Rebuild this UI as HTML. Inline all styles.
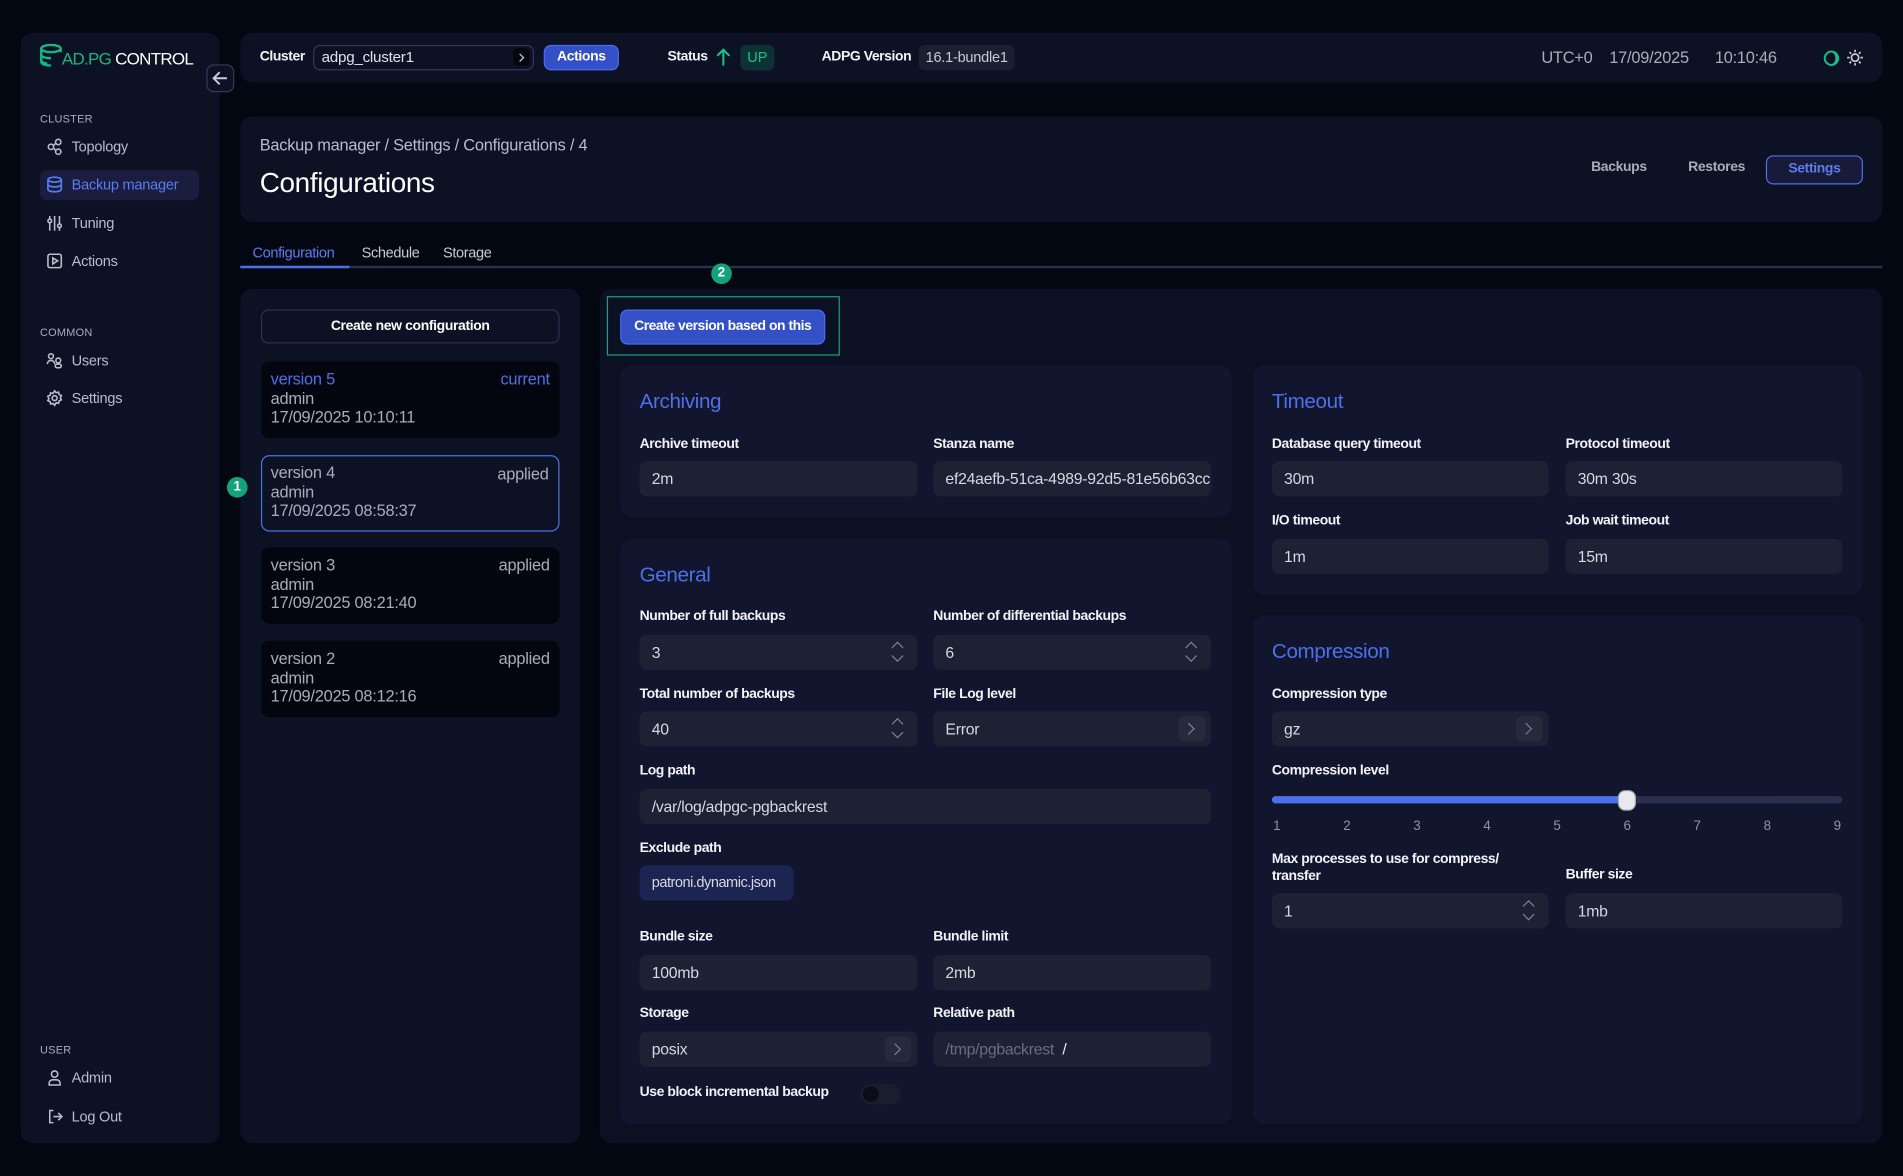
<!DOCTYPE html>
<html><head><meta charset="utf-8"><style>
html,body{margin:0;padding:0;background:#030711;overflow:hidden}
#w{position:absolute;left:0;top:0;width:1568px;height:969px;transform:scale(1.21365);transform-origin:0 0;font-family:"Liberation Sans",sans-serif;color:#e6e8f0;background:#030711}
.a{position:absolute}
.p{position:absolute;background:#0c1124;border-radius:10px}
.c{position:absolute;background:#12152e;border-radius:10px}
.sec{position:absolute;font-size:9px;color:#a9adbd;letter-spacing:.2px}
.nav{position:absolute;font-size:12px;color:#b9bccb;display:flex;align-items:center;gap:7px;letter-spacing:-.2px}
.nav svg{width:14px;height:14px}
.lb{position:absolute;font-size:11.5px;font-weight:bold;color:#f2f3f7;letter-spacing:-.35px}
.in{position:absolute;background:#1d2133;border-radius:6px;height:29px;font-size:13px;color:#d6d8e2;line-height:29px;padding-left:10px;box-sizing:border-box;overflow:hidden;white-space:nowrap;letter-spacing:-.2px}
.h{position:absolute;font-size:17px;color:#4d70e8;letter-spacing:-.3px}
.sp{position:absolute;right:5px;top:3px;width:22px;height:23px;border-radius:5px}
.sp:before,.sp:after{content:"";position:absolute;left:7px;width:6px;height:6px;border-left:1.5px solid #7c8092;border-top:1.5px solid #7c8092}
.sp:before{top:4px;transform:rotate(45deg)}
.sp:after{top:11px;transform:rotate(225deg)}
.ch{position:absolute;right:5px;top:4px;width:22px;height:21px;border-radius:5px;background:#252a3c}
.ch:after{content:"";position:absolute;left:5px;top:7px;width:6px;height:6px;border-right:1.5px solid #7c8092;border-top:1.5px solid #7c8092;transform:rotate(45deg)}
.vc{position:absolute;left:215px;width:246px;height:63px;border-radius:7px;background:#03060e;box-sizing:border-box;font-size:13.5px;color:#a9acb9;padding:7px 8px;line-height:15.5px;letter-spacing:-.2px}
.vc .r{position:absolute;right:8px;top:7px}
.bd{position:absolute;width:17px;height:17px;border-radius:50%;background:#13a37a;color:#fff;font-size:11px;font-weight:bold;text-align:center;line-height:17px}
</style></head><body><div id="w">

<!-- sidebar -->
<div class="p" style="left:17px;top:27px;width:164px;height:915px;background:#0c1124"></div>
<svg class="a" style="left:32px;top:36px" width="22" height="20" viewBox="0 0 22 20"><g fill="none" stroke="#17b583" stroke-width="2"><ellipse cx="10" cy="4" rx="8" ry="3"/><path d="M2 4v11c0 2 4 3 8 3M2 9c0 2 4 3 8 3M2 14c0 1 2 2 5 2.5"/><path d="M18 4v3"/></g></svg>
<div class="a" style="left:51px;top:40px;font-size:14px;letter-spacing:-.6px"><span style="color:#17b583">AD.PG</span> <span style="color:#fff">CONTROL</span></div>
<div class="a" style="left:170px;top:53px;width:21px;height:21px;border:1.2px solid #343a5c;border-radius:6px;background:#0c1124"><svg width="21" height="21" viewBox="0 0 21 21"><path d="M16 10.5H5M10 5.5l-5 5 5 5" fill="none" stroke="#c8cbe0" stroke-width="1.6"/></svg></div>

<div class="sec" style="left:33px;top:93px">CLUSTER</div>
<div class="nav" style="left:38px;top:114px"><svg viewBox="0 0 14 14" fill="none" stroke="#b9bccb" stroke-width="1.3"><circle cx="4" cy="7" r="2.2"/><circle cx="10" cy="3" r="2.2"/><circle cx="10" cy="11" r="2.2"/><path d="M6 6l2-2M6 8l2 2"/></svg>Topology</div>
<div class="a" style="left:33px;top:140px;width:131px;height:25px;background:#1a1d3d;border-radius:6px"></div>
<div class="nav" style="left:38px;top:145px;color:#5b7cf0"><svg viewBox="0 0 14 14" fill="none" stroke="#5b7cf0" stroke-width="1.4"><ellipse cx="7" cy="3" rx="5.5" ry="2"/><path d="M1.5 3v8c0 1.1 2.5 2 5.5 2s5.5-.9 5.5-2V3M1.5 7c0 1.1 2.5 2 5.5 2s5.5-.9 5.5-2"/></svg>Backup manager</div>
<div class="nav" style="left:38px;top:177px"><svg viewBox="0 0 14 14" fill="none" stroke="#b9bccb" stroke-width="1.3"><path d="M3 1v12M11 1v12M7 1v12"/><circle cx="3" cy="5" r="1.5" fill="#0c1124"/><circle cx="11" cy="9" r="1.5" fill="#0c1124"/></svg>Tuning</div>
<div class="nav" style="left:38px;top:208px"><svg viewBox="0 0 14 14" fill="none" stroke="#b9bccb" stroke-width="1.3"><rect x="1.5" y="1.5" width="11" height="11" rx="1.5"/><path d="M5.5 4.5v5l4-2.5z"/></svg>Actions</div>

<div class="sec" style="left:33px;top:269px">COMMON</div>
<div class="nav" style="left:38px;top:290px"><svg viewBox="0 0 14 14" fill="none" stroke="#b9bccb" stroke-width="1.3"><circle cx="4" cy="3.5" r="2"/><path d="M1 10c0-2 1.5-3 3-3s3 1 3 3"/><circle cx="10" cy="7" r="2"/><rect x="7.5" y="10" width="5" height="3" rx="1.5"/></svg>Users</div>
<div class="nav" style="left:38px;top:321px"><svg viewBox="0 0 14 14" fill="none" stroke="#b9bccb" stroke-width="1.3"><circle cx="7" cy="7" r="2"/><path d="M7 1l1.3 1.6 2-.5.4 2 1.9.8-.9 1.8.9 1.8-1.9.8-.4 2-2-.5L7 13l-1.3-1.6-2 .5-.4-2-1.9-.8.9-1.8-.9-1.8 1.9-.8.4-2 2 .5z"/></svg>Settings</div>

<div class="sec" style="left:33px;top:860px">USER</div>
<div class="nav" style="left:38px;top:881px"><svg viewBox="0 0 14 14" fill="none" stroke="#b9bccb" stroke-width="1.3"><circle cx="7" cy="4" r="2.6"/><path d="M2.5 13v-1.5c0-1.5 1.2-2.8 2.8-2.8h3.4c1.6 0 2.8 1.3 2.8 2.8V13z"/></svg>Admin</div>
<div class="nav" style="left:38px;top:913px"><svg viewBox="0 0 14 14" fill="none" stroke="#b9bccb" stroke-width="1.3"><path d="M6 2H3v10h3M6 7h7M10 4l3 3-3 3"/></svg>Log Out</div>

<!-- top bar -->
<div class="p" style="left:198px;top:27px;width:1353px;height:41px"></div>
<div class="lb" style="left:214px;top:41px">Cluster</div>
<div class="a" style="left:258px;top:37px;width:182px;height:21px;border:1.3px solid #33385a;border-radius:6px;box-sizing:border-box;font-size:12.5px;color:#dfe1ea;line-height:19px;padding-left:6px;letter-spacing:-.2px">adpg_cluster1<div class="a" style="right:3px;top:2px;width:13px;height:14px;background:#03060e;border-radius:3px"></div><div class="a" style="right:8px;top:7px;width:4px;height:4px;border-right:1.3px solid #c8cbd6;border-top:1.3px solid #c8cbd6;transform:rotate(45deg)"></div></div>
<div class="a" style="left:448px;top:37px;width:62px;height:21px;background:#3350c6;border:1.3px solid #4a6cf0;border-radius:6px;box-sizing:border-box;font-size:11.5px;font-weight:bold;color:#fff;text-align:center;line-height:19px;letter-spacing:-.3px">Actions</div>
<div class="lb" style="left:550px;top:41px">Status</div>
<svg class="a" style="left:589px;top:39px" width="14" height="16" viewBox="0 0 14 16"><path d="M7 15V2M2 7l5-5 5 5" fill="none" stroke="#17c08a" stroke-width="1.7"/></svg>
<div class="a" style="left:610px;top:37px;width:28px;height:21px;background:#0d3236;border-radius:5px;font-size:12px;color:#17c08a;text-align:center;line-height:21px">UP</div>
<div class="lb" style="left:677px;top:41px">ADPG Version</div>
<div class="a" style="left:757px;top:37px;width:79px;height:21px;background:#1b1f2f;border-radius:5px;font-size:12px;color:#c8cad4;text-align:center;line-height:21px;letter-spacing:-.2px">16.1-bundle1</div>
<div class="a" style="left:1270px;top:40px;font-size:13.5px;color:#a9acb9;letter-spacing:-.2px">UTC+0</div>
<div class="a" style="left:1326px;top:40px;font-size:13.5px;color:#a9acb9;letter-spacing:-.2px">17/09/2025</div>
<div class="a" style="left:1413px;top:40px;font-size:13.5px;color:#a9acb9;letter-spacing:-.2px">10:10:46</div>
<svg class="a" style="left:1502px;top:41px" width="14" height="14" viewBox="0 0 14 14"><circle cx="7" cy="7" r="5.5" fill="none" stroke="#17c08a" stroke-width="1.6"/><path d="M7 1.5a5.5 5.5 0 0 1 0 11a4 5.5 0 0 0 0-11z" fill="none" stroke="#17c08a" stroke-width="1.4"/></svg>
<svg class="a" style="left:1521px;top:40px" width="15" height="15" viewBox="0 0 15 15" fill="none" stroke="#c8cad4" stroke-width="1.4"><circle cx="7.5" cy="7.5" r="3"/><path d="M7.5 1v2M7.5 12v2M1 7.5h2M12 7.5h2M2.9 2.9l1.4 1.4M10.7 10.7l1.4 1.4M2.9 12.1l1.4-1.4M10.7 4.3l1.4-1.4"/></svg>

<!-- header -->
<div class="p" style="left:198px;top:96px;width:1353px;height:87px"></div>
<div class="a" style="left:214px;top:112px;font-size:13.5px;color:#b9bccb;letter-spacing:-.2px">Backup manager / Settings / Configurations / 4</div>
<div class="a" style="left:214px;top:137px;font-size:23px;color:#fff;letter-spacing:-.3px">Configurations</div>
<div class="a" style="left:1311px;top:132px;font-size:11.5px;font-weight:bold;color:#a9acb9;letter-spacing:-.3px">Backups</div>
<div class="a" style="left:1391px;top:132px;font-size:11.5px;font-weight:bold;color:#a9acb9;letter-spacing:-.3px">Restores</div>
<div class="a" style="left:1455px;top:128px;width:80px;height:24px;border:1.5px solid #4d70e8;border-radius:6px;background:#181a3a;box-sizing:border-box;text-align:center;font-size:11.5px;font-weight:bold;color:#5b7cf0;line-height:21px;letter-spacing:-.3px">Settings</div>

<!-- tabs -->
<div class="a" style="left:198px;top:219px;width:1353px;height:1.5px;background:#2a2f4a"></div>
<div class="a" style="left:198px;top:219px;width:90px;height:2px;background:#4d70e8"></div>
<div class="a" style="left:208px;top:201px;font-size:12px;color:#5b7cf0;letter-spacing:-.3px">Configuration</div>
<div class="a" style="left:298px;top:201px;font-size:12px;color:#c8cad4;letter-spacing:-.3px">Schedule</div>
<div class="a" style="left:365px;top:201px;font-size:12px;color:#c8cad4;letter-spacing:-.3px">Storage</div>

<!-- left panel -->
<div class="p" style="left:198px;top:238px;width:280px;height:704px"></div>
<div class="a" style="left:215px;top:255px;width:246px;height:28px;border:1.3px solid #2c3152;border-radius:6px;box-sizing:border-box;text-align:center;font-size:11.5px;font-weight:bold;color:#fff;line-height:26px;letter-spacing:-.3px">Create new configuration</div>
<div class="vc" style="top:298px"><span style="color:#4d70e8">version 5</span><span class="r" style="color:#4d70e8">current</span><br>admin<br>17/09/2025 10:10:11</div>
<div class="vc" style="top:375px;background:#0c1124;border:1.5px solid #4d70e8;padding:6px 7px"><span>version 4</span><span class="r">applied</span><br>admin<br>17/09/2025 08:58:37</div>
<div class="vc" style="top:451px"><span>version 3</span><span class="r">applied</span><br>admin<br>17/09/2025 08:21:40</div>
<div class="vc" style="top:528px"><span>version 2</span><span class="r">applied</span><br>admin<br>17/09/2025 08:12:16</div>
<div class="bd" style="left:187px;top:393px">1</div>

<!-- right panel -->
<div class="p" style="left:494px;top:238px;width:1057px;height:704px;background:#0b1022"></div>
<div class="bd" style="left:586px;top:217px">2</div>
<div class="a" style="left:500px;top:244px;width:192px;height:49px;border:1.5px solid #13a37a;box-sizing:border-box"></div>
<div class="a" style="left:511px;top:255px;width:169px;height:29px;background:#3350c6;border:1.3px solid #4a6cf0;border-radius:6px;box-sizing:border-box;text-align:center;font-size:11.5px;font-weight:bold;color:#fff;line-height:27px;letter-spacing:-.4px">Create version based on this</div>

<!-- Archiving -->
<div class="c" style="left:511px;top:301px;width:504px;height:125px"></div>
<div class="h" style="left:527px;top:321px">Archiving</div>
<div class="lb" style="left:527px;top:360px">Archive timeout</div>
<div class="lb" style="left:769px;top:360px">Stanza name</div>
<div class="in" style="left:527px;top:380px;width:229px">2m</div>
<div class="in" style="left:769px;top:380px;width:229px">ef24aefb-51ca-4989-92d5-81e56b63cc</div>

<!-- General -->
<div class="c" style="left:511px;top:444px;width:504px;height:482px"></div>
<div class="h" style="left:527px;top:464px">General</div>
<div class="lb" style="left:527px;top:502px">Number of full backups</div>
<div class="lb" style="left:769px;top:502px">Number of differential backups</div>
<div class="in" style="left:527px;top:523px;width:229px">3<div class="sp"></div></div>
<div class="in" style="left:769px;top:523px;width:229px">6<div class="sp"></div></div>
<div class="lb" style="left:527px;top:566px">Total number of backups</div>
<div class="lb" style="left:769px;top:566px">File Log level</div>
<div class="in" style="left:527px;top:586px;width:229px">40<div class="sp"></div></div>
<div class="in" style="left:769px;top:586px;width:229px">Error<div class="ch"></div></div>
<div class="lb" style="left:527px;top:629px">Log path</div>
<div class="in" style="left:527px;top:650px;width:471px">/var/log/adpgc-pgbackrest</div>
<div class="lb" style="left:527px;top:693px">Exclude path</div>
<div class="in" style="left:527px;top:713px;width:127px;background:#1c2452;font-size:12px;letter-spacing:-.4px">patroni.dynamic.json</div>
<div class="lb" style="left:527px;top:766px">Bundle size</div>
<div class="lb" style="left:769px;top:766px">Bundle limit</div>
<div class="in" style="left:527px;top:787px;width:229px">100mb</div>
<div class="in" style="left:769px;top:787px;width:229px">2mb</div>
<div class="lb" style="left:527px;top:829px">Storage</div>
<div class="lb" style="left:769px;top:829px">Relative path</div>
<div class="in" style="left:527px;top:850px;width:229px">posix<div class="ch"></div></div>
<div class="in" style="left:769px;top:850px;width:229px;color:#6a6e80">/tmp/pgbackrest <span style="color:#e6e8f0">&nbsp;/</span></div>
<div class="lb" style="left:527px;top:894px">Use block incremental backup</div>
<div class="a" style="left:709px;top:893px;width:33px;height:17px;border-radius:9px;background:#191d2e"></div>
<div class="a" style="left:711px;top:895px;width:13px;height:13px;border-radius:50%;background:#0a0d18"></div>

<!-- Timeout -->
<div class="c" style="left:1032px;top:301px;width:503px;height:189px"></div>
<div class="h" style="left:1048px;top:321px">Timeout</div>
<div class="lb" style="left:1048px;top:360px">Database query timeout</div>
<div class="lb" style="left:1290px;top:360px">Protocol timeout</div>
<div class="in" style="left:1048px;top:380px;width:228px">30m</div>
<div class="in" style="left:1290px;top:380px;width:228px">30m 30s</div>
<div class="lb" style="left:1048px;top:423px">I/O timeout</div>
<div class="lb" style="left:1290px;top:423px">Job wait timeout</div>
<div class="in" style="left:1048px;top:444px;width:228px">1m</div>
<div class="in" style="left:1290px;top:444px;width:228px">15m</div>

<!-- Compression -->
<div class="c" style="left:1032px;top:507px;width:503px;height:419px"></div>
<div class="h" style="left:1048px;top:527px">Compression</div>
<div class="lb" style="left:1048px;top:566px">Compression type</div>
<div class="in" style="left:1048px;top:586px;width:228px">gz<div class="ch"></div></div>
<div class="lb" style="left:1048px;top:629px">Compression level</div>
<div class="a" style="left:1048px;top:656px;width:470px;height:6px;border-radius:3px;background:#2a2f4d"></div>
<div class="a" style="left:1048px;top:656px;width:292px;height:6px;border-radius:3px;background:#4d70e8"></div>
<div class="a" style="left:1333px;top:651px;width:13px;height:15px;border-radius:6px;background:#e8e9ee;border:1px solid #9aa"></div>
<div class="a" style="left:1049px;top:675px;width:468px;display:flex;justify-content:space-between;font-size:11px;color:#8f93a3"><span>1</span><span>2</span><span>3</span><span>4</span><span>5</span><span>6</span><span>7</span><span>8</span><span>9</span></div>
<div class="lb" style="left:1048px;top:701px;line-height:14px">Max processes to use for compress/<br>transfer</div>
<div class="lb" style="left:1290px;top:715px">Buffer size</div>
<div class="in" style="left:1048px;top:736px;width:228px">1<div class="sp"></div></div>
<div class="in" style="left:1290px;top:736px;width:228px">1mb</div>

</div></body></html>
